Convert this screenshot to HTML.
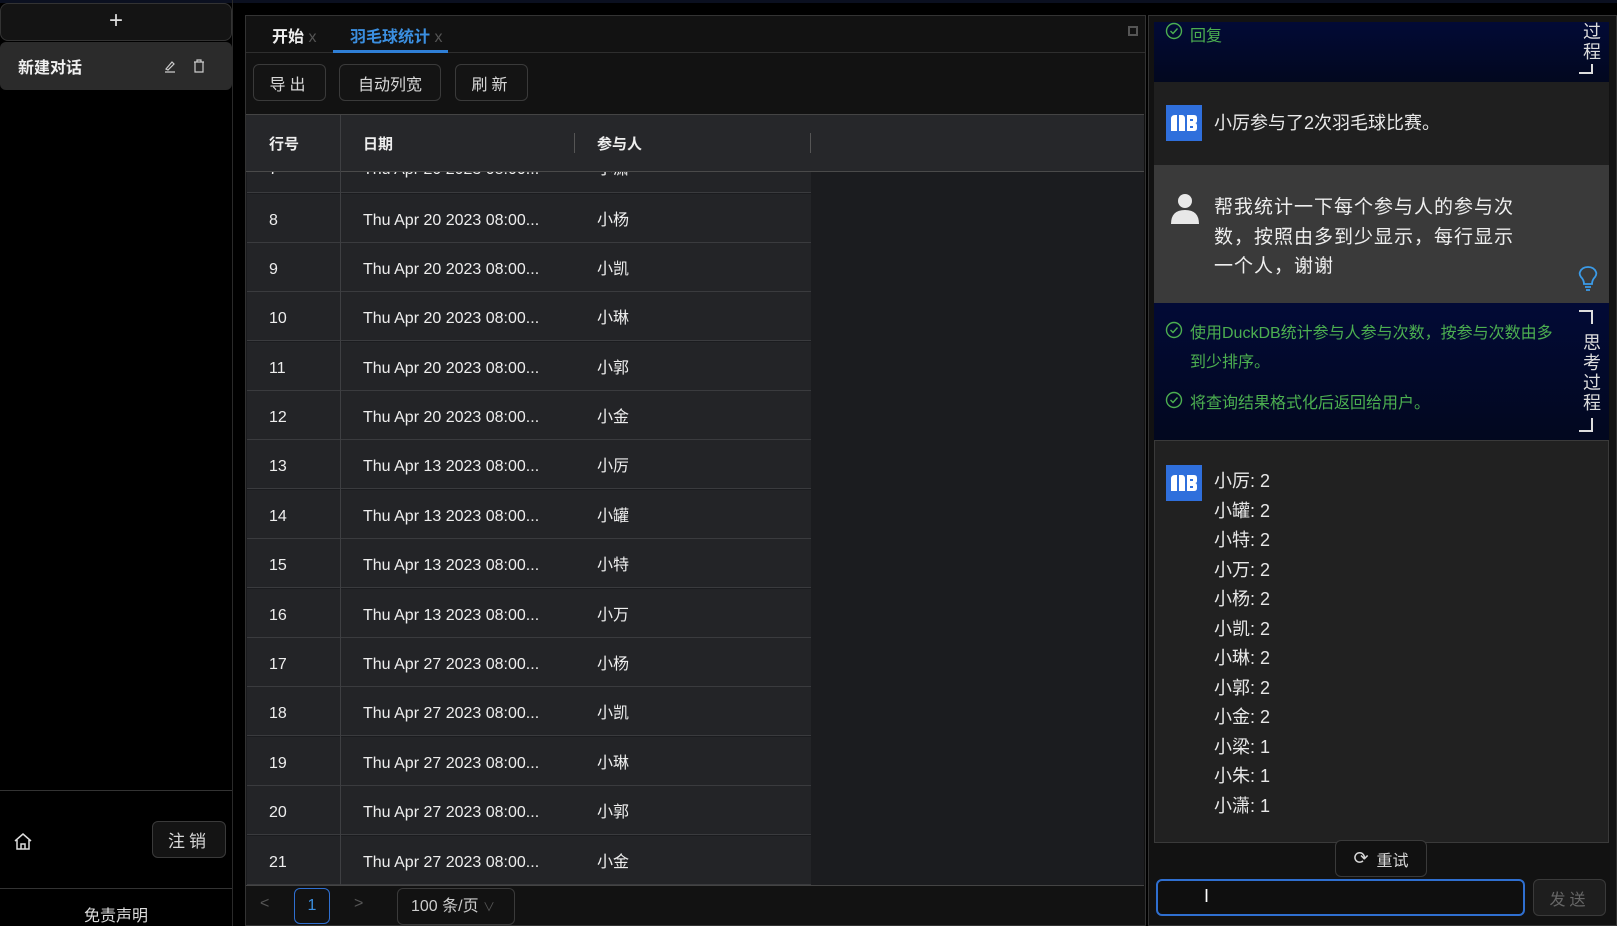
<!DOCTYPE html>
<html><head><meta charset="utf-8"><style>
*{margin:0;padding:0;box-sizing:border-box}
body{width:1617px;height:926px;background:#000;font-family:"Liberation Sans","Noto Sans CJK SC",sans-serif;color:#e6e6e6;position:relative;overflow:hidden}
.a{position:absolute}
.btn{position:absolute;border:1px solid #3a3a3a;border-radius:6px;background:#141414;color:#d8d8d8;font-size:16px;display:flex;align-items:center;justify-content:center}
.row{position:absolute;left:247px;width:564px;height:49px;background:#232427;border-bottom:1px solid #3a3b3e;font-size:16px;color:#eee}
.row span{position:absolute;top:2px;height:49px;line-height:49px}
.ans{position:absolute;left:1214px;font-size:18px;color:#e8e8e8}
.g{color:#4caf50;font-size:16px}
.chk{position:absolute}
</style></head><body>
<div class="a" style="left:0;top:0;width:1617px;height:3px;background:#0b1020"></div>
<!-- sidebar -->
<div class="a" style="left:0;top:3px;width:232px;height:38px;background:#141414;border:1px solid #333;border-radius:8px;text-align:center;font-size:24px;line-height:34px;color:#ddd">+</div>
<div class="a" style="left:0;top:42px;width:232px;height:48px;background:#2b2b2b;border-radius:6px"></div>
<div class="a" style="left:18px;top:54px;font-size:16px;font-weight:bold;color:#f0f0f0">新建对话</div>
<svg class="a" style="left:163px;top:59px" width="14" height="14" viewBox="0 0 14 14"><path d="M3 10 L9 3 L11 5 L5 11 Z M2 13 H12" stroke="#ccc" fill="none" stroke-width="1.2"/></svg>
<svg class="a" style="left:193px;top:59px" width="12" height="14" viewBox="0 0 12 14"><path d="M1 3 H11 M4 3 V1 H8 V3 M2 3 V13 H10 V3" stroke="#ccc" fill="none" stroke-width="1.2"/></svg>
<div class="a" style="left:0;top:790px;width:232px;height:1px;background:#333"></div>
<svg class="a" style="left:13px;top:832px" width="20" height="20" viewBox="0 0 20 20"><path d="M2 9 L10 2 L18 9 M4 8 V17 H16 V8 M8 17 V12 H12 V17" stroke="#ddd" fill="none" stroke-width="1.5"/></svg>
<div class="btn" style="left:152px;top:821px;width:74px;height:37px;letter-spacing:4px;font-size:17px">注销</div>
<div class="a" style="left:0;top:888px;width:232px;height:1px;background:#333"></div>
<div class="a" style="left:0;top:902px;width:232px;text-align:center;font-size:16px;color:#ddd">免责声明</div>
<div class="a" style="left:232px;top:0;width:1px;height:926px;background:#2a2a2a"></div>
<!-- middle -->
<div class="a" style="left:245px;top:15px;width:901px;height:911px;background:#121212;border:1px solid #333"></div>
<div class="a" style="left:246px;top:52px;width:899px;height:1px;background:#2e2e2e"></div>
<div class="a" style="left:272px;top:23px;font-size:16px;font-weight:bold;color:#eee">开始 <span style="color:#555;font-weight:normal">x</span></div>
<div class="a" style="left:350px;top:23px;font-size:16px;font-weight:bold;color:#3b8fe0">羽毛球统计 <span style="color:#555;font-weight:normal">x</span></div>
<div class="a" style="left:333px;top:50px;width:115px;height:3px;background:#2f7fd6"></div>
<div class="a" style="left:1128px;top:26px;width:10px;height:10px;border:2px solid #555"></div>
<div class="btn" style="left:253px;top:64px;width:73px;height:37px;letter-spacing:4px">导出</div>
<div class="btn" style="left:339px;top:64px;width:102px;height:37px">自动列宽</div>
<div class="btn" style="left:455px;top:64px;width:73px;height:37px;letter-spacing:4px">刷新</div>
<div class="a" style="left:246px;top:114px;width:898px;height:772px;background:#1b1c1f;border-top:1px solid #444"></div>
<div class="a" style="left:246px;top:115px;width:898px;height:57px;background:#26272a;border-bottom:1px solid #4a4a4a;font-size:15px;font-weight:bold;color:#eee">
<span class="a" style="left:23px;top:2px;line-height:56px">行号</span><span class="a" style="left:117px;top:2px;line-height:56px">日期</span><span class="a" style="left:351px;top:2px;line-height:56px">参与人</span>
<div class="a" style="left:328px;top:18px;width:1px;height:20px;background:#555"></div>
<div class="a" style="left:564px;top:18px;width:1px;height:20px;background:#555"></div>
</div>
<div class="row" style="top:172px;height:21px;overflow:hidden"><span style="left:22px;top:-27px">7</span><span style="left:116px;top:-27px">Thu Apr 20 2023 08:00...</span><span style="left:350px;top:-27px">小潇</span></div>
<div class="row" style="top:194px"><span style="left:22px">8</span><span style="left:116px">Thu Apr 20 2023 08:00...</span><span style="left:350px">小杨</span></div>
<div class="row" style="top:243px"><span style="left:22px">9</span><span style="left:116px">Thu Apr 20 2023 08:00...</span><span style="left:350px">小凯</span></div>
<div class="row" style="top:292px"><span style="left:22px">10</span><span style="left:116px">Thu Apr 20 2023 08:00...</span><span style="left:350px">小琳</span></div>
<div class="row" style="top:342px"><span style="left:22px">11</span><span style="left:116px">Thu Apr 20 2023 08:00...</span><span style="left:350px">小郭</span></div>
<div class="row" style="top:391px"><span style="left:22px">12</span><span style="left:116px">Thu Apr 20 2023 08:00...</span><span style="left:350px">小金</span></div>
<div class="row" style="top:440px"><span style="left:22px">13</span><span style="left:116px">Thu Apr 13 2023 08:00...</span><span style="left:350px">小厉</span></div>
<div class="row" style="top:490px"><span style="left:22px">14</span><span style="left:116px">Thu Apr 13 2023 08:00...</span><span style="left:350px">小罐</span></div>
<div class="row" style="top:539px"><span style="left:22px">15</span><span style="left:116px">Thu Apr 13 2023 08:00...</span><span style="left:350px">小特</span></div>
<div class="row" style="top:589px"><span style="left:22px">16</span><span style="left:116px">Thu Apr 13 2023 08:00...</span><span style="left:350px">小万</span></div>
<div class="row" style="top:638px"><span style="left:22px">17</span><span style="left:116px">Thu Apr 27 2023 08:00...</span><span style="left:350px">小杨</span></div>
<div class="row" style="top:687px"><span style="left:22px">18</span><span style="left:116px">Thu Apr 27 2023 08:00...</span><span style="left:350px">小凯</span></div>
<div class="row" style="top:737px"><span style="left:22px">19</span><span style="left:116px">Thu Apr 27 2023 08:00...</span><span style="left:350px">小琳</span></div>
<div class="row" style="top:786px"><span style="left:22px">20</span><span style="left:116px">Thu Apr 27 2023 08:00...</span><span style="left:350px">小郭</span></div>
<div class="row" style="top:836px"><span style="left:22px">21</span><span style="left:116px">Thu Apr 27 2023 08:00...</span><span style="left:350px">小金</span></div>
<div class="a" style="left:340px;top:115px;width:1px;height:771px;background:#3e3f42"></div>
<div class="a" style="left:246px;top:885px;width:898px;height:1px;background:#444"></div>
<div class="a" style="left:260px;top:895px;color:#555;font-size:16px">&lt;</div>
<div class="a" style="left:294px;top:888px;width:36px;height:36px;border:1px solid #2f6fd0;border-radius:6px;color:#3b8fe0;font-size:16px;text-align:center;line-height:34px">1</div>
<div class="a" style="left:354px;top:895px;color:#555;font-size:16px">&gt;</div>
<div class="a" style="left:397px;top:888px;width:118px;height:37px;border:1px solid #3a3a3a;border-radius:6px;font-size:16px;color:#ccc;padding:0 0 0 13px;line-height:35px">100 条/页 <span style="color:#555;font-size:12px">∨</span></div>
<!-- right -->
<div class="a" style="left:1148px;top:15px;width:469px;height:911px;background:#121212;border:1px solid #333"></div>
<div class="a" style="left:1154px;top:22px;width:455px;height:60px;background:linear-gradient(#020a36,#02081f)"></div>
<svg class="chk" style="left:1165px;top:22px" width="18" height="18" viewBox="0 0 18 18"><circle cx="9" cy="9" r="7.5" stroke="#4caf50" fill="none" stroke-width="1.4"/><path d="M5.5 9 L8 11.5 L12.5 6.5" stroke="#4caf50" fill="none" stroke-width="1.4"/></svg>
<div class="a g" style="left:1190px;top:22px">回复</div>
<div class="a" style="left:1583px;top:22px;font-size:18px;line-height:20px;width:20px;color:#ddd">过程</div>
<div class="a" style="left:1579px;top:64px;width:14px;height:10px;border-right:2px solid #ddd;border-bottom:2px solid #ddd"></div>
<div class="a" style="left:1154px;top:82px;width:455px;height:83px;background:#1f1f1f"></div>
<svg class="a" style="left:1166px;top:105px" width="36" height="36" viewBox="0 0 36 36"><rect width="36" height="36" fill="#2f6fdc"/><path d="M5 26 V14 Q5 10 9 10 H11 V26 Z M13 26 V10 H16 Q19 10 19 14 V26 Z M21 10 H28 Q31 10 31 13 V16 Q31 18 29 18 Q31 18 31 21 V23 Q31 26 28 26 H21 Z" fill="#fff"/><rect x="24" y="14" width="3" height="2" fill="#2f6fdc"/><rect x="24" y="21" width="3" height="2" fill="#2f6fdc"/></svg>
<div class="ans" style="top:109px">小厉参与了2次羽毛球比赛。</div>
<div class="a" style="left:1154px;top:165px;width:455px;height:138px;background:#3a3a3a"></div>
<svg class="a" style="left:1170px;top:192px" width="30" height="32" viewBox="0 0 30 32"><circle cx="15" cy="9" r="7" fill="#e8e8e8"/><path d="M1 32 Q1 18 15 18 Q29 18 29 32 Z" fill="#e8e8e8"/></svg>
<div class="a" style="left:1214px;top:193px;font-size:19px;line-height:29.5px;letter-spacing:1px;color:#eee;width:300px">帮我统计一下每个参与人的参与次<br>数，按照由多到少显示，每行显示<br>一个人，谢谢</div>
<svg class="a" style="left:1578px;top:266px" width="20" height="26" viewBox="0 0 20 26"><path d="M6 18 Q6 14 3 11 Q1 8 2 6 Q4 1 10 1 Q16 1 18 6 Q19 8 17 11 Q14 14 14 18 Z M7 21 H13 M8 24 H12" stroke="#3b9be8" fill="none" stroke-width="1.8"/></svg>
<div class="a" style="left:1154px;top:303px;width:455px;height:137px;background:linear-gradient(#020a36,#02081f)"></div>
<svg class="chk" style="left:1165px;top:321px" width="18" height="18" viewBox="0 0 18 18"><circle cx="9" cy="9" r="7.5" stroke="#4caf50" fill="none" stroke-width="1.4"/><path d="M5.5 9 L8 11.5 L12.5 6.5" stroke="#4caf50" fill="none" stroke-width="1.4"/></svg>
<div class="a g" style="left:1190px;top:319px;width:376px;line-height:29px">使用DuckDB统计参与人参与次数，按参与次数由多到少排序。</div>
<svg class="chk" style="left:1165px;top:391px" width="18" height="18" viewBox="0 0 18 18"><circle cx="9" cy="9" r="7.5" stroke="#4caf50" fill="none" stroke-width="1.4"/><path d="M5.5 9 L8 11.5 L12.5 6.5" stroke="#4caf50" fill="none" stroke-width="1.4"/></svg>
<div class="a g" style="left:1190px;top:389px">将查询结果格式化后返回给用户。</div>
<div class="a" style="left:1579px;top:310px;width:14px;height:14px;border-right:2px solid #ddd;border-top:2px solid #ddd"></div>
<div class="a" style="left:1583px;top:333px;font-size:18px;line-height:20px;width:20px;color:#ddd">思考过程</div>
<div class="a" style="left:1579px;top:418px;width:14px;height:14px;border-right:2px solid #ddd;border-bottom:2px solid #ddd"></div>
<div class="a" style="left:1154px;top:440px;width:455px;height:403px;background:#212121;border:1px solid #3a3a3a"></div>
<svg class="a" style="left:1166px;top:465px" width="36" height="36" viewBox="0 0 36 36"><rect width="36" height="36" fill="#2f6fdc"/><path d="M5 26 V14 Q5 10 9 10 H11 V26 Z M13 26 V10 H16 Q19 10 19 14 V26 Z M21 10 H28 Q31 10 31 13 V16 Q31 18 29 18 Q31 18 31 21 V23 Q31 26 28 26 H21 Z" fill="#fff"/><rect x="24" y="14" width="3" height="2" fill="#2f6fdc"/><rect x="24" y="21" width="3" height="2" fill="#2f6fdc"/></svg>
<div class="ans" style="top:467px;line-height:29.5px">小厉: 2<br>小罐: 2<br>小特: 2<br>小万: 2<br>小杨: 2<br>小凯: 2<br>小琳: 2<br>小郭: 2<br>小金: 2<br>小梁: 1<br>小朱: 1<br>小潇: 1</div>
<div class="btn" style="left:1335px;top:840px;width:92px;height:37px;background:#111;font-size:16px"><span style="font-size:18px;margin-right:8px">⟳</span>重试</div>
<div class="a" style="left:1156px;top:879px;width:369px;height:37px;border:2px solid #2f6fd0;border-radius:6px;background:#0f0f0f"></div>
<div class="a" style="left:1204px;top:886px;font-size:18px;color:#fff">I</div>
<div class="btn" style="left:1533px;top:879px;width:73px;height:37px;background:#1e1e1e;color:#666;letter-spacing:4px">发送</div>
</body></html>
